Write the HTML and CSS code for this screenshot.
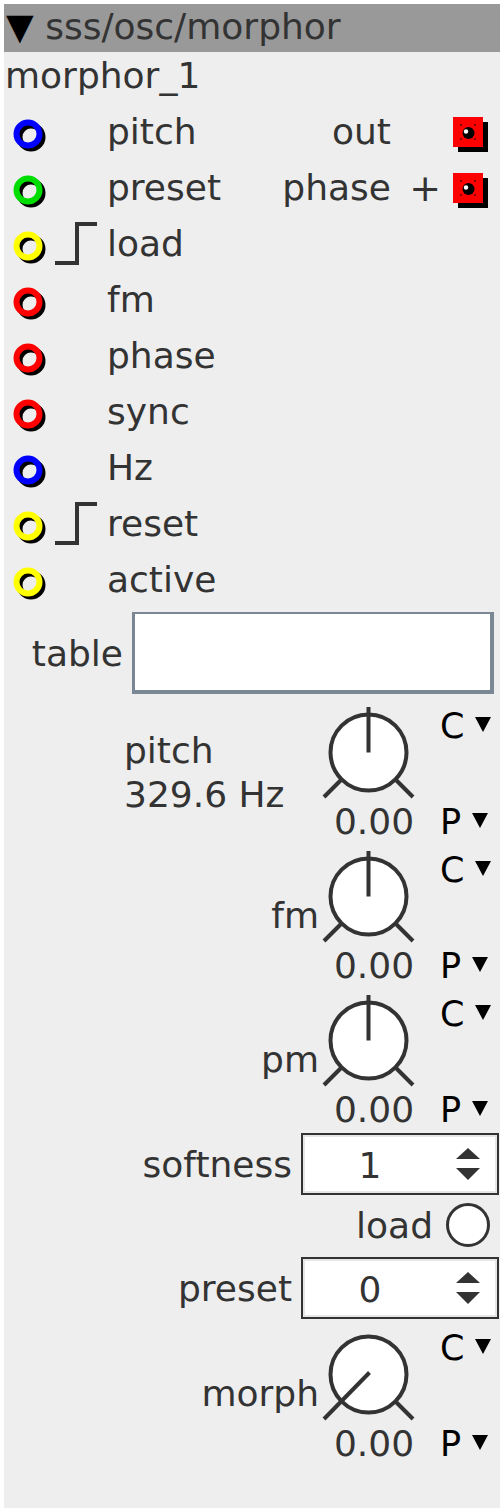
FILE: index.html
```html
<!DOCTYPE html>
<html>
<head>
<meta charset="utf-8">
<link rel="stylesheet" href="styles.css">
</head>
<body>
<div class="panel">
  <div class="header"><span class="caret">▼</span> sss/osc/morphor</div>
  <div class="name">morphor_1</div>

  <div class="row">
    <div class="inlet-col">
      <svg class="ring" width="36" height="36" viewBox="0 0 36 36"><circle cx="18" cy="18" r="11.5" fill="none" stroke="#000" stroke-width="6"/><circle cx="15" cy="15" r="11.5" fill="none" stroke="#0000ff" stroke-width="6"/></svg>
      <span class="trig-space"></span>
    </div>
    <div class="label">pitch</div>
    <div class="out-label">out</div>
    <div class="plus"></div>
    <svg class="outlet" width="36" height="36" viewBox="0 0 36 36"><rect x="5" y="5" width="30" height="30" fill="#000"/><rect x="0" y="0" width="30" height="30" fill="#ff0000"/><rect x="7" y="7" width="2" height="2" fill="#800"/><rect x="21" y="7" width="2" height="2" fill="#800"/><rect x="7" y="21" width="2" height="2" fill="#800"/><rect x="21" y="21" width="2" height="2" fill="#800"/><circle cx="15.5" cy="16" r="6" fill="#000"/><circle cx="13" cy="14.5" r="2.2" fill="#fff"/></svg>
  </div>

  <div class="row">
    <div class="inlet-col">
      <svg class="ring" width="36" height="36" viewBox="0 0 36 36"><circle cx="18" cy="18" r="11.5" fill="none" stroke="#000" stroke-width="6"/><circle cx="15" cy="15" r="11.5" fill="none" stroke="#00dd00" stroke-width="6"/></svg>
      <span class="trig-space"></span>
    </div>
    <div class="label">preset</div>
    <div class="out-label">phase</div>
    <div class="plus">+</div>
    <svg class="outlet" width="36" height="36" viewBox="0 0 36 36"><rect x="5" y="5" width="30" height="30" fill="#000"/><rect x="0" y="0" width="30" height="30" fill="#ff0000"/><rect x="7" y="7" width="2" height="2" fill="#800"/><rect x="21" y="7" width="2" height="2" fill="#800"/><rect x="7" y="21" width="2" height="2" fill="#800"/><rect x="21" y="21" width="2" height="2" fill="#800"/><circle cx="15.5" cy="16" r="6" fill="#000"/><circle cx="13" cy="14.5" r="2.2" fill="#fff"/></svg>
  </div>

  <div class="row">
    <div class="inlet-col">
      <svg class="ring" width="36" height="36" viewBox="0 0 36 36"><circle cx="18" cy="18" r="11.5" fill="none" stroke="#000" stroke-width="6"/><circle cx="15" cy="15" r="11.5" fill="none" stroke="#ffff00" stroke-width="6"/></svg>
      <svg class="trig" width="46" height="44" viewBox="0 0 46 44"><path d="M2 41 H24 V2 H44" fill="none" stroke="#333" stroke-width="4"/></svg>
    </div>
    <div class="label">load</div>
  </div>

  <div class="row">
    <div class="inlet-col">
      <svg class="ring" width="36" height="36" viewBox="0 0 36 36"><circle cx="18" cy="18" r="11.5" fill="none" stroke="#000" stroke-width="6"/><circle cx="15" cy="15" r="11.5" fill="none" stroke="#ff0000" stroke-width="6"/></svg>
      <span class="trig-space"></span>
    </div>
    <div class="label">fm</div>
  </div>

  <div class="row">
    <div class="inlet-col">
      <svg class="ring" width="36" height="36" viewBox="0 0 36 36"><circle cx="18" cy="18" r="11.5" fill="none" stroke="#000" stroke-width="6"/><circle cx="15" cy="15" r="11.5" fill="none" stroke="#ff0000" stroke-width="6"/></svg>
      <span class="trig-space"></span>
    </div>
    <div class="label">phase</div>
  </div>

  <div class="row">
    <div class="inlet-col">
      <svg class="ring" width="36" height="36" viewBox="0 0 36 36"><circle cx="18" cy="18" r="11.5" fill="none" stroke="#000" stroke-width="6"/><circle cx="15" cy="15" r="11.5" fill="none" stroke="#ff0000" stroke-width="6"/></svg>
      <span class="trig-space"></span>
    </div>
    <div class="label">sync</div>
  </div>

  <div class="row">
    <div class="inlet-col">
      <svg class="ring" width="36" height="36" viewBox="0 0 36 36"><circle cx="18" cy="18" r="11.5" fill="none" stroke="#000" stroke-width="6"/><circle cx="15" cy="15" r="11.5" fill="none" stroke="#0000ff" stroke-width="6"/></svg>
      <span class="trig-space"></span>
    </div>
    <div class="label">Hz</div>
  </div>

  <div class="row">
    <div class="inlet-col">
      <svg class="ring" width="36" height="36" viewBox="0 0 36 36"><circle cx="18" cy="18" r="11.5" fill="none" stroke="#000" stroke-width="6"/><circle cx="15" cy="15" r="11.5" fill="none" stroke="#ffff00" stroke-width="6"/></svg>
      <svg class="trig" width="46" height="44" viewBox="0 0 46 44"><path d="M2 41 H24 V2 H44" fill="none" stroke="#333" stroke-width="4"/></svg>
    </div>
    <div class="label">reset</div>
  </div>

  <div class="row">
    <div class="inlet-col">
      <svg class="ring" width="36" height="36" viewBox="0 0 36 36"><circle cx="18" cy="18" r="11.5" fill="none" stroke="#000" stroke-width="6"/><circle cx="15" cy="15" r="11.5" fill="none" stroke="#ffff00" stroke-width="6"/></svg>
      <span class="trig-space"></span>
    </div>
    <div class="label">active</div>
  </div>

  <div class="table-row">
    <div class="table-label">table</div>
    <div class="table-input"></div>
  </div>

  <div class="kblock first">
    <div class="klabel multi">pitch<br>329.6 Hz</div>
    <svg class="knob" width="96" height="96" viewBox="0 0 96 96"><circle cx="47.5" cy="48.5" r="38" fill="#fff" stroke="#333" stroke-width="4"/><line x1="47.5" y1="48.5" x2="47.5" y2="3" stroke="#333" stroke-width="4"/><line x1="20" y1="76" x2="3" y2="93" stroke="#333" stroke-width="4"/><line x1="75" y1="76" x2="92" y2="93" stroke="#333" stroke-width="4"/></svg>
    <div class="cp top"><span>C</span><i class="tri"></i></div>
    <div class="kval">0.00</div>
    <div class="cp bottom"><span>P</span><i class="tri"></i></div>
  </div>

  <div class="kblock">
    <div class="klabel">fm</div>
    <svg class="knob" width="96" height="96" viewBox="0 0 96 96"><circle cx="47.5" cy="48.5" r="38" fill="#fff" stroke="#333" stroke-width="4"/><line x1="47.5" y1="48.5" x2="47.5" y2="3" stroke="#333" stroke-width="4"/><line x1="20" y1="76" x2="3" y2="93" stroke="#333" stroke-width="4"/><line x1="75" y1="76" x2="92" y2="93" stroke="#333" stroke-width="4"/></svg>
    <div class="cp top"><span>C</span><i class="tri"></i></div>
    <div class="kval">0.00</div>
    <div class="cp bottom"><span>P</span><i class="tri"></i></div>
  </div>

  <div class="kblock">
    <div class="klabel">pm</div>
    <svg class="knob" width="96" height="96" viewBox="0 0 96 96"><circle cx="47.5" cy="48.5" r="38" fill="#fff" stroke="#333" stroke-width="4"/><line x1="47.5" y1="48.5" x2="47.5" y2="3" stroke="#333" stroke-width="4"/><line x1="20" y1="76" x2="3" y2="93" stroke="#333" stroke-width="4"/><line x1="75" y1="76" x2="92" y2="93" stroke="#333" stroke-width="4"/></svg>
    <div class="cp top"><span>C</span><i class="tri"></i></div>
    <div class="kval">0.00</div>
    <div class="cp bottom"><span>P</span><i class="tri"></i></div>
  </div>

  <div class="spin-row">
    <div class="spin-label">softness</div>
    <div class="spin">
      <div class="spin-val">1</div>
      <svg class="arrows" width="24" height="32" viewBox="0 0 24 32"><polygon points="0,11 24,11 12,0" fill="#333"/><polygon points="0,20 24,20 12,32" fill="#333"/></svg>
    </div>
  </div>

  <div class="load-row">
    <div class="load-label">load</div>
    <div class="load-btn"></div>
  </div>

  <div class="spin-row second">
    <div class="spin-label">preset</div>
    <div class="spin">
      <div class="spin-val">0</div>
      <svg class="arrows" width="24" height="32" viewBox="0 0 24 32"><polygon points="0,11 24,11 12,0" fill="#333"/><polygon points="0,20 24,20 12,32" fill="#333"/></svg>
    </div>
  </div>

  <div class="kblock morph">
    <div class="klabel">morph</div>
    <svg class="knob" width="96" height="96" viewBox="0 0 96 96"><circle cx="47.5" cy="48.5" r="38" fill="#fff" stroke="#333" stroke-width="4"/><line x1="48.5" y1="46.5" x2="3" y2="93" stroke="#333" stroke-width="4"/><line x1="75" y1="76" x2="92" y2="93" stroke="#333" stroke-width="4"/></svg>
    <div class="cp top"><span>C</span><i class="tri"></i></div>
    <div class="kval">0.00</div>
    <div class="cp bottom"><span>P</span><i class="tri"></i></div>
  </div>
</div>
</body>
</html>
```

FILE: styles.css
```css
html, body {
  margin: 0;
  padding: 0;
  background: #ffffff;
}

.panel {
  margin: 4px;
  width: 496px;
  height: 1504px;
  background: #eeeeee;
  font-family: "DejaVu Sans", sans-serif;
  font-size: 36px;
  color: #333333;
  overflow: hidden;
}

.header {
  height: 48px;
  line-height: 46px;
  background: #999999;
  padding-left: 2px;
  white-space: nowrap;
}

.caret {
  color: #000000;
}

.name {
  height: 48px;
  line-height: 48px;
  padding-bottom: 6px;
  padding-left: 1px;
}

.row {
  height: 56px;
  display: flex;
  align-items: flex-start;
}

.inlet-col {
  width: 103px;
  flex: none;
  display: flex;
  align-items: flex-start;
}

.ring {
  margin-left: 9px;
  margin-top: 13px;
  flex: none;
}

.trig {
  margin-left: 4px;
  margin-top: 4px;
  flex: none;
}

.trig-space {
  width: 46px;
  margin-left: 4px;
}

.label {
  line-height: 52px;
  flex: 1;
}

.out-label {
  line-height: 52px;
}

.plus {
  width: 62px;
  box-sizing: border-box;
  padding-right: 12px;
  text-align: right;
  line-height: 52px;
  font-size: 38px;
}

.outlet {
  margin-top: 11px;
  margin-right: 11px;
  flex: none;
}

.table-row {
  display: flex;
  align-items: center;
  padding-top: 2px;
}

.table-label {
  width: 123px;
  box-sizing: border-box;
  padding-right: 4px;
  text-align: right;
}

.table-input {
  margin-left: 5px;
  width: 362px;
  height: 82px;
  box-sizing: border-box;
  background: #ffffff;
  border-style: solid;
  border-color: #7a8794;
  border-width: 2px 4px 4px 3px;
}

.kblock {
  display: grid;
  grid-template-columns: 317px 106px 73px;
  grid-template-rows: 96px 44px;
  margin-top: 4px;
}

.kblock.first {
  margin-top: 10px;
}

.kblock.morph {
  margin-top: 7px;
}

.klabel {
  grid-row: 1;
  grid-column: 1;
  text-align: right;
  padding-top: 46px;
  padding-right: 2px;
  line-height: 44px;
}

.klabel.multi {
  grid-row: 1 / span 2;
  text-align: left;
  padding-top: 25px;
  padding-left: 120px;
}

.knob {
  grid-row: 1;
  grid-column: 2;
  display: block;
}

.kval {
  grid-row: 2;
  grid-column: 2;
  text-align: center;
  line-height: 44px;
}

.cp {
  grid-column: 3;
  display: flex;
  align-items: flex-start;
  color: #000000;
  font-size: 35px;
  padding-left: 13px;
}

.cp span {
  line-height: 40px;
}

.cp.top {
  grid-row: 1;
  padding-top: 2px;
}

.cp.bottom {
  grid-row: 2;
}

.cp.bottom span {
  line-height: 44px;
}

.tri {
  display: block;
  width: 0;
  height: 0;
  margin-left: 11px;
  margin-top: 11px;
  border-left: 8px solid transparent;
  border-right: 8px solid transparent;
  border-top: 15px solid #000000;
}

.cp.bottom .tri {
  margin-top: 13px;
}

.spin-row {
  display: flex;
  justify-content: flex-end;
  align-items: center;
  height: 62px;
  margin-top: 1px;
}

.spin-row.second {
  margin-top: 10px;
}

.spin-label {
  margin-right: 9px;
}

.spin {
  width: 198px;
  height: 62px;
  box-sizing: border-box;
  border: 2px solid #333333;
  background: #ffffff;
  box-shadow: inset 0 0 0 2px #e6e6e6;
  margin-right: 1px;
  display: flex;
  align-items: center;
}

.spin-val {
  width: 134px;
  text-align: center;
  line-height: 54px;
  padding-top: 4px;
}

.arrows {
  margin-left: 19px;
  flex: none;
}

.load-row {
  display: flex;
  justify-content: flex-end;
  align-items: center;
  height: 44px;
  margin-top: 8px;
}

.load-label {
  margin-right: 13px;
}

.load-btn {
  width: 44px;
  height: 44px;
  box-sizing: border-box;
  border: 3px solid #333333;
  border-radius: 50%;
  background: #ffffff;
  margin-right: 10px;
}
```
